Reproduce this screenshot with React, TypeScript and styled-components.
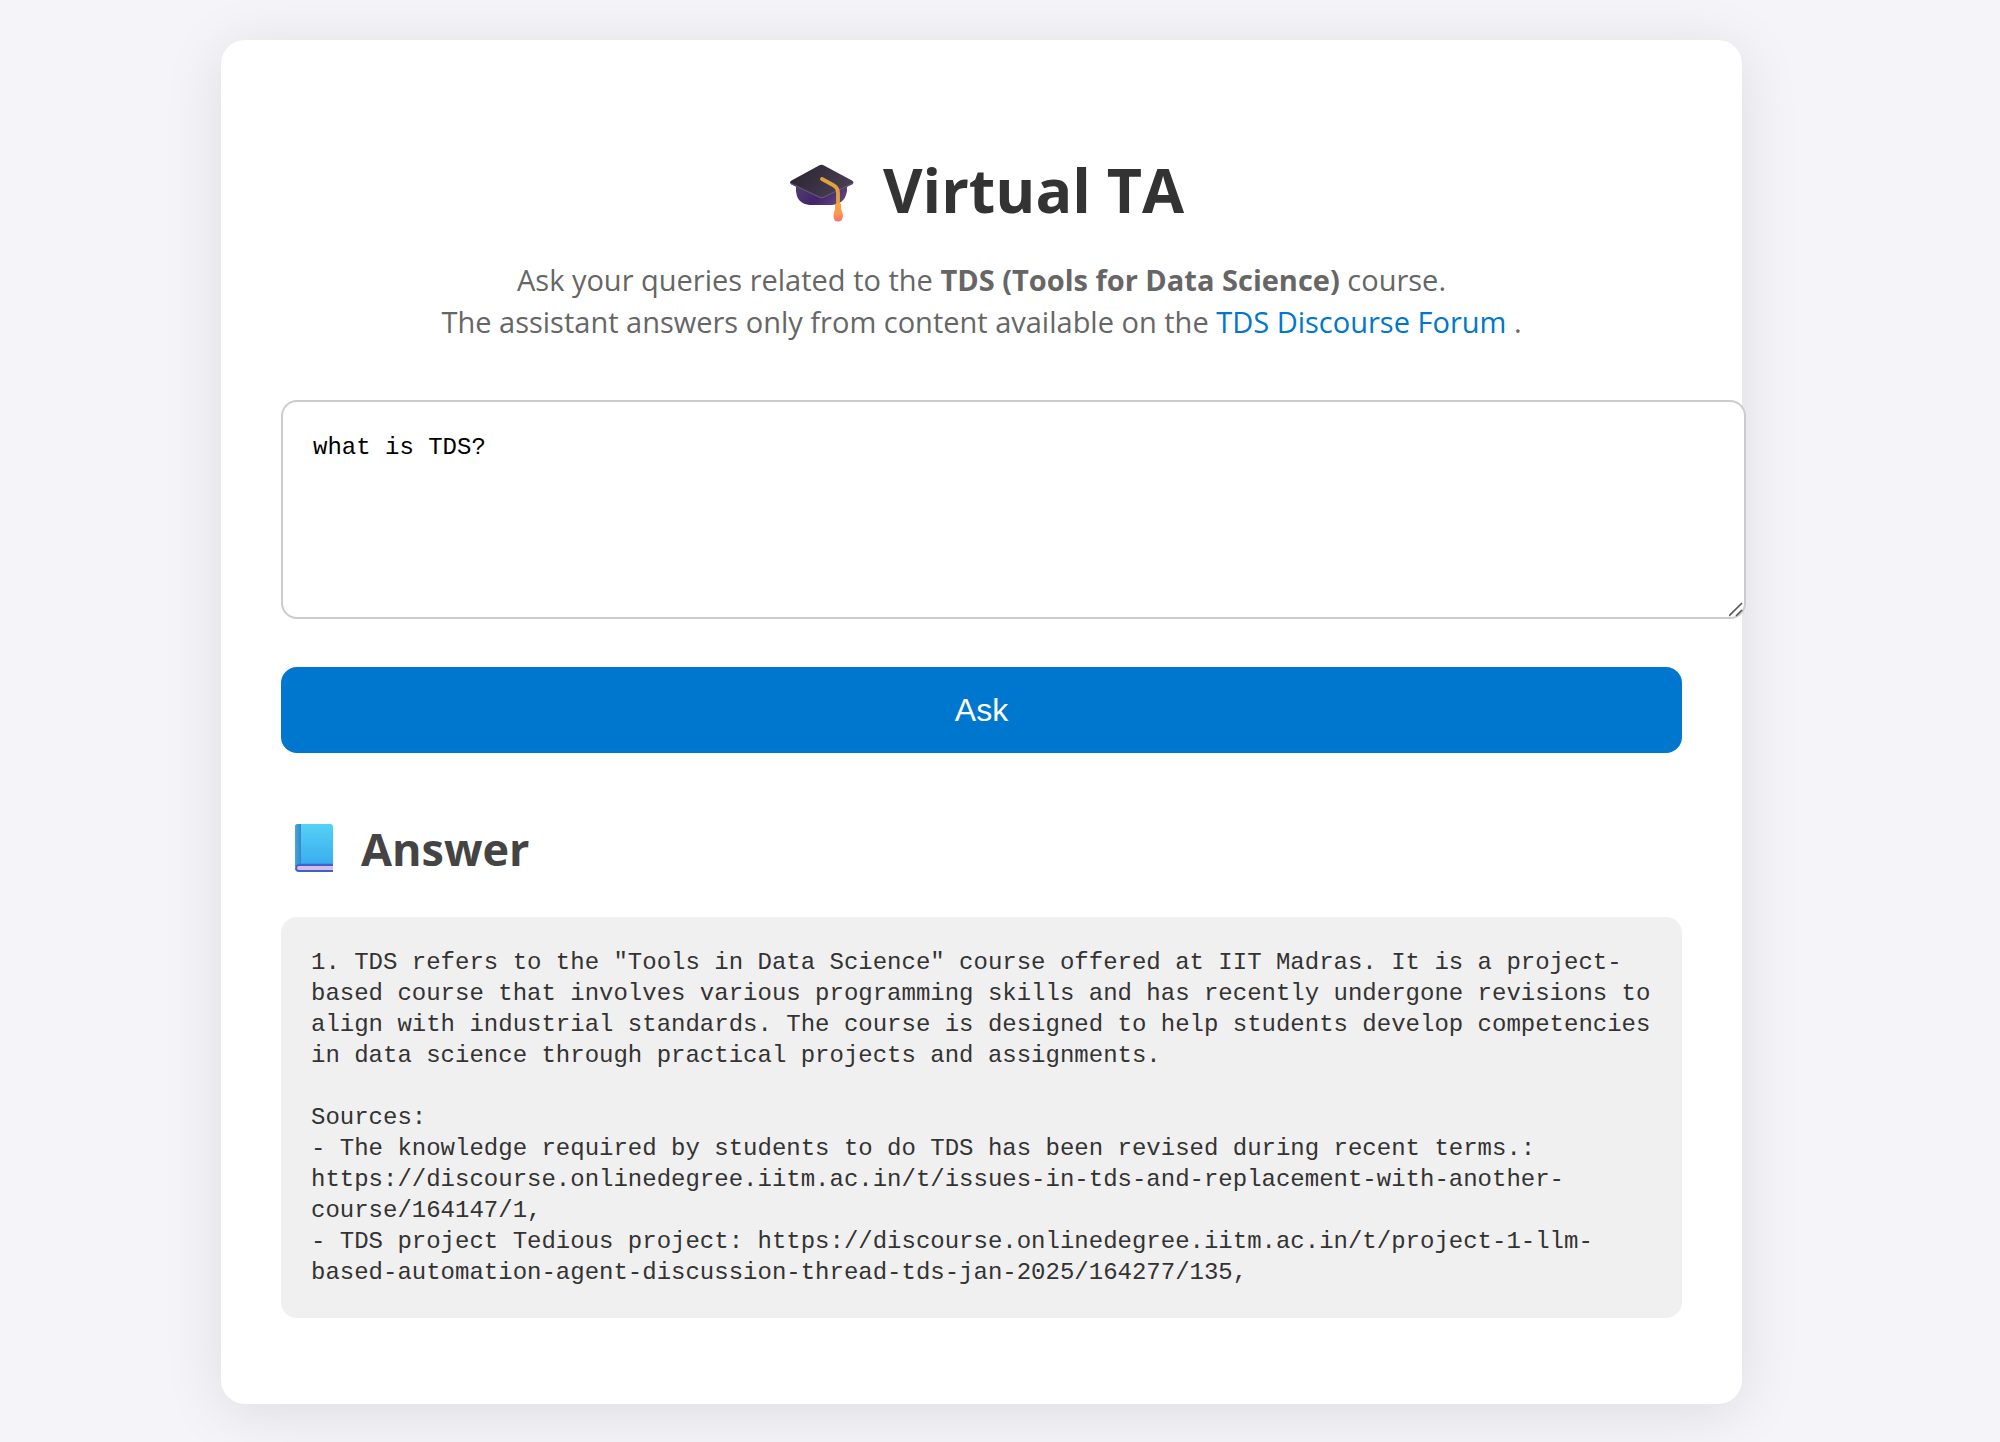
import React, { useState } from "react";
import styled, { createGlobalStyle } from "styled-components";

const SANS = '"Open Sans", "Noto Sans", sans-serif';
const MONO = '"Liberation Mono", monospace';

const GlobalStyle = createGlobalStyle`
  body {
    margin: 0;
    padding: 40px 37px 38px 0;
    background: #f4f4f9;
    font-family: ${SANS};
  }
`;

const Card = styled.main`
  box-sizing: border-box;
  max-width: 1521px;
  margin: 0 auto;
  padding: 60px 60px 86px;
  background: #fff;
  border-radius: 24px;
  box-shadow: 0 8px 60px rgba(0, 0, 0, 0.1);
`;

const Title = styled.h1`
  display: flex;
  align-items: center;
  justify-content: center;
  gap: 18px;
  margin: 46px 0 25px;
  color: #333;
  font-size: 61px;
  line-height: 88px;
`;

const Intro = styled.p`
  margin: 0 0 57px;
  color: #666;
  font-size: 29px;
  line-height: 42px;
  text-align: center;
`;

const ForumLink = styled.a`
  color: #0077cc;
  text-decoration: none;
`;

const Form = styled.form`
  display: block;
`;

const Question = styled.textarea`
  display: block;
  width: 100%;
  height: 155px;
  margin: 0 0 48px;
  padding: 30px;
  border: 2px solid #ccc;
  border-radius: 16px;
  background: #fff;
  color: #000;
  font-family: ${MONO};
  font-size: 24px;
  line-height: 31px;
  resize: vertical;
  outline: none;

  &::-webkit-resizer {
    background: url("data:image/svg+xml,%3Csvg xmlns='http://www.w3.org/2000/svg' width='15' height='15'%3E%3Cpath d='M0 14L13 1M7 14L13 8' stroke='%23555' stroke-width='1.6'/%3E%3C/svg%3E") no-repeat;
  }
`;

const AskButton = styled.button`
  display: block;
  width: 100%;
  padding: 24px;
  border: 0;
  border-radius: 16px;
  background: #0077cf;
  color: #fff;
  font-family: "Liberation Sans", Arial, sans-serif;
  font-size: 32px;
  line-height: 38px;
  cursor: pointer;
`;

const AnswerTitle = styled.h2`
  display: flex;
  align-items: center;
  gap: 13px;
  margin: 62px 0 34px;
  color: #444;
  font-size: 45px;
  line-height: 68px;
`;

const AnswerBox = styled.pre`
  margin: 0;
  padding: 30px;
  border-radius: 16px;
  background: #f0f0f0;
  color: #333;
  font-family: ${MONO};
  font-size: 24px;
  line-height: 31px;
  white-space: pre-wrap;
  overflow-wrap: break-word;
`;

const Icon = styled.svg`
  flex: none;
`;

const CapIcon = () => (
  <Icon width="86" height="64" viewBox="0 -2 86 64" aria-hidden="true">
    <defs>
      <linearGradient id="capTop" x1="0" y1="0.2" x2="1" y2="0.6">
        <stop offset="0" stopColor="#292431" />
        <stop offset="1" stopColor="#4b4056" />
      </linearGradient>
      <linearGradient id="capBase" x1="0" y1="0" x2="1" y2="0.4">
        <stop offset="0" stopColor="#50406a" />
        <stop offset="0.6" stopColor="#44236f" />
        <stop offset="1" stopColor="#5b417b" />
      </linearGradient>
      <linearGradient id="capTassel" x1="0" y1="0" x2="0" y2="1">
        <stop offset="0" stopColor="#f7a63f" />
        <stop offset="0.6" stopColor="#ff9650" />
        <stop offset="1" stopColor="#ff6b70" />
      </linearGradient>
    </defs>
    <path d="M17 24V31Q18 44 31 45H53Q66 44 68 31V24Z" fill="url(#capBase)" />
    <path d="M40 5.600Q42.500 4 45 5.600L73 20.500Q76 22.500 73 24.500L45 37.500Q42.500 39 40 37.500L12.500 24.500Q9.500 22.500 12.500 20.500Z" fill="url(#capTop)" />
    <path d="M12 23.500L40 37Q42.500 38.300 45 37L73.500 23.500" fill="none" stroke="#665872" strokeWidth="1.200" />
    <path d="M43 19L54 25Q59 27.500 59 33V46" fill="none" stroke="#dfa23c" strokeWidth="3.800" strokeLinecap="round" strokeLinejoin="round" />
    <path d="M56 44Q59 42.500 62 44L62 49Q64 53 64 56Q63.500 61.500 59 61.500Q54.500 61.500 54.500 56Q54.500 53 56 49Z" fill="url(#capTassel)" />
  </Icon>
);

const BookIcon = () => (
  <Icon width="67" height="54" viewBox="0 0 67 54" aria-hidden="true">
    <defs>
      <linearGradient id="bookCover" x1="0" y1="0" x2="0" y2="1">
        <stop offset="0" stopColor="#55d2f4" />
        <stop offset="1" stopColor="#37a9ee" />
      </linearGradient>
      <linearGradient id="bookSpine" x1="0" y1="0" x2="1" y2="0">
        <stop offset="0" stopColor="#45a6dc" />
        <stop offset="1" stopColor="#3488c6" />
      </linearGradient>
    </defs>
    <path d="M17 43H52V50H18Q14 50 14 46Z" fill="#3c62c8" />
    <path d="M18 44H52V48H18Q16 48 16 46T18 44Z" fill="#d8bce8" />
    <path d="M17 2H49Q52 2 52 5V43H18Q15 43 14 46V5Q14 2 17 2Z" fill="url(#bookCover)" />
    <path d="M17 2H20V43H18Q15 43 14 46V5Q14 2 17 2Z" fill="url(#bookSpine)" />
    <path d="M15 45Q16 42.500 19 42.500H52" fill="none" stroke="#3a65d4" strokeWidth="1.400" />
  </Icon>
);

const ANSWER = `1. TDS refers to the "Tools in Data Science" course offered at IIT Madras. It is a project-based course that involves various programming skills and has recently undergone revisions to align with industrial standards. The course is designed to help students develop competencies in data science through practical projects and assignments.

Sources:
- The knowledge required by students to do TDS has been revised during recent terms.: https://discourse.onlinedegree.iitm.ac.in/t/issues-in-tds-and-replacement-with-another-course/164147/1,
- TDS project Tedious project: https://discourse.onlinedegree.iitm.ac.in/t/project-1-llm-based-automation-agent-discussion-thread-tds-jan-2025/164277/135,`;

export default function App() {
  const [question, setQuestion] = useState("what is TDS?");

  return (
    <>
      <GlobalStyle />
      <Card>
        <Title>
          <CapIcon />
          Virtual TA
        </Title>
        <Intro>
          Ask your queries related to the <strong>TDS (Tools for Data Science)</strong> course.
          <br />
          The assistant answers only from content available on the{" "}
          <ForumLink href="https://discourse.onlinedegree.iitm.ac.in">TDS Discourse Forum</ForumLink> .
        </Intro>
        <Form onSubmit={(event) => event.preventDefault()}>
          <Question
            aria-label="Your question"
            spellCheck={false}
            value={question}
            onChange={(event) => setQuestion(event.target.value)}
          />
          <AskButton type="submit">Ask</AskButton>
        </Form>
        <AnswerTitle>
          <BookIcon />
          Answer
        </AnswerTitle>
        <AnswerBox>{ANSWER}</AnswerBox>
      </Card>
    </>
  );
}
